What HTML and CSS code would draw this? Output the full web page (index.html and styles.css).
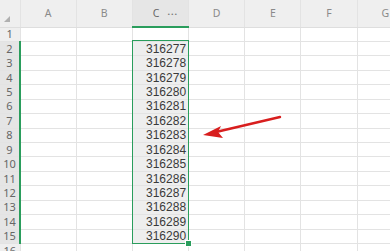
FILE: index.html
```html
<!DOCTYPE html>
<html lang="en">

<head>
    <meta charset="UTF-8">
    <meta name="viewport" content="width=device-width, initial-scale=1.0">
    <title>Sheet</title>

    <link rel="stylesheet" href="styles.css">
</head>

<body>
    <div class="sheet">
        <table class="grid">
            <tr class="col-heads">
                <th class="corner"><span class="corner-mark"></span></th>
                <th>A</th>
                <th>B</th>
                <th class="active">C<span class="dots">···</span></th>
                <th>D</th>
                <th>E</th>
                <th>F</th>
                <th>G</th>
            </tr>
            <tr><th class="row-head">1</th><td></td><td></td><td></td><td></td><td></td><td></td><td></td></tr>
            <tr><th class="row-head sel">2</th><td></td><td></td><td class="num">316277</td><td></td><td></td><td></td><td></td></tr>
            <tr><th class="row-head sel">3</th><td></td><td></td><td class="num">316278</td><td></td><td></td><td></td><td></td></tr>
            <tr><th class="row-head sel">4</th><td></td><td></td><td class="num">316279</td><td></td><td></td><td></td><td></td></tr>
            <tr><th class="row-head sel">5</th><td></td><td></td><td class="num">316280</td><td></td><td></td><td></td><td></td></tr>
            <tr><th class="row-head sel">6</th><td></td><td></td><td class="num">316281</td><td></td><td></td><td></td><td></td></tr>
            <tr><th class="row-head sel">7</th><td></td><td></td><td class="num">316282</td><td></td><td></td><td></td><td></td></tr>
            <tr><th class="row-head sel">8</th><td></td><td></td><td class="num">316283</td><td></td><td></td><td></td><td></td></tr>
            <tr><th class="row-head sel">9</th><td></td><td></td><td class="num">316284</td><td></td><td></td><td></td><td></td></tr>
            <tr><th class="row-head sel">10</th><td></td><td></td><td class="num">316285</td><td></td><td></td><td></td><td></td></tr>
            <tr><th class="row-head sel">11</th><td></td><td></td><td class="num">316286</td><td></td><td></td><td></td><td></td></tr>
            <tr><th class="row-head sel">12</th><td></td><td></td><td class="num">316287</td><td></td><td></td><td></td><td></td></tr>
            <tr><th class="row-head sel">13</th><td></td><td></td><td class="num">316288</td><td></td><td></td><td></td><td></td></tr>
            <tr><th class="row-head sel">14</th><td></td><td></td><td class="num">316289</td><td></td><td></td><td></td><td></td></tr>
            <tr><th class="row-head sel">15</th><td></td><td></td><td class="num">316290</td><td></td><td></td><td></td><td></td></tr>
            <tr><th class="row-head">16</th><td></td><td></td><td></td><td></td><td></td><td></td><td></td></tr>
        </table>

        <!-- selection box over C2:C15 -->
        <div class="selection"><span class="handle"></span></div>

        <!-- red pointer arrow -->
        <svg class="arrow" width="100" height="40" viewBox="0 0 100 40">
            <path d="M80 7 L16 22" stroke="#d81e1e" stroke-width="2.4" stroke-linecap="round" fill="none" />
            <path d="M3 25 L21 16 L18 22 L23 28 Z" fill="#d81e1e" />
        </svg>
    </div>
</body>

</html>
```

FILE: styles.css
```css
body {
    margin: 0;
    background: #fff;
    font-family: "Liberation Sans", Arial, sans-serif;
    overflow: hidden;
}

.sheet {
    position: relative;
    width: 390px;
    height: 251px;
    overflow: hidden;
}

.grid {
    border-collapse: collapse;
    table-layout: fixed;
    width: 413px;
}

.grid th,
.grid td {
    padding: 0;
    border: 1px solid #e3e3e3;
    height: 14.45px;
    line-height: 10px;
    box-sizing: border-box;
    overflow: hidden;
    white-space: nowrap;
}

.grid th {
    width: 56.2px;
    background: #efefef;
    color: #777;
    font-weight: normal;
    font-family: "Noto Sans", sans-serif;
    font-size: 10px;
}

.col-heads th {
    height: 27px;
    border-top: none;
    border-bottom-color: #dedede;
    color: #8a8a8a;
    font-size: 10.5px;
}

.col-heads th.active {
    background: #e6e6e6;
    border-bottom: 2px solid #2a9d5c;
    color: #666;
    padding-left: 10px;
}

.dots {
    margin-left: 8px;
    font-size: 9px;
    letter-spacing: 1px;
    font-weight: bold;
    color: #777;
}

.grid th.corner {
    width: 20px;
    border-left: none;
    position: relative;
}

.corner-mark {
    position: absolute;
    left: 4px;
    bottom: 5px;
    border-left: 6px solid transparent;
    border-bottom: 6px solid #b0b0b0;
}

.row-head {
    border-left: none !important;
    color: #666 !important;
    font-size: 11px !important;
    text-align: center;
}

.row-head.sel {
    background: #e5e5e5;
    border-right: 2px solid #2a9d5c;
}

.num {
    text-align: right;
    padding-right: 2px !important;
    font-size: 12px;
    color: #3a3a3a;
    background: #eeeeee;
}

.selection {
    position: absolute;
    left: 132px;
    top: 40px;
    width: 57px;
    height: 204px;
    border: 1.5px solid #2a9d5c;
    box-sizing: border-box;
}

.handle {
    position: absolute;
    right: -4px;
    bottom: -4px;
    width: 5px;
    height: 5px;
    background: #2a9d5c;
    border: 1px solid #fff;
}

.arrow {
    position: absolute;
    left: 200px;
    top: 110px;
}
```
